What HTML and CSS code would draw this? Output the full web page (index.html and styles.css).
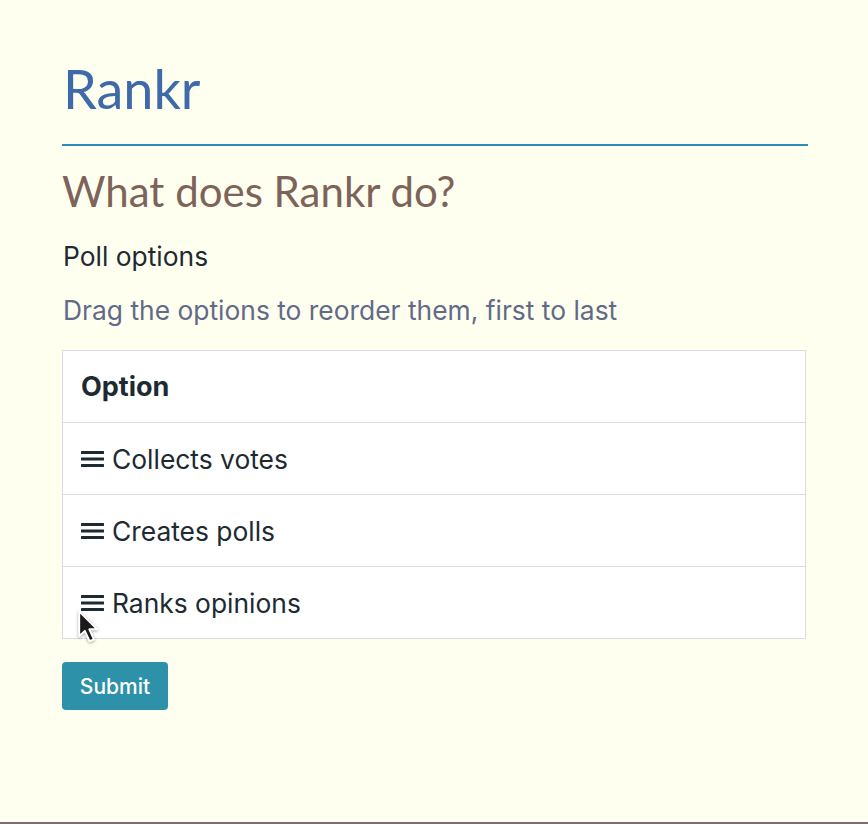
FILE: index.html
```html
<!DOCTYPE html>
<html lang="en">
<head>
<meta charset="utf-8">
<title>Rankr</title>
<link rel="stylesheet" href="styles.css">
</head>
<body>
<div class="page">
  <main class="container">
    <h1 class="title">Rankr</h1>
    <hr class="rule">
    <h2 class="question">What does Rankr do?</h2>
    <p class="label">Poll options</p>
    <p class="hint">Drag the options to reorder them, first to last</p>
    <div class="table">
      <div class="row head">Option</div>
      <div class="row"><svg class="grip" viewBox="0 0 23 18" width="23" height="18"><rect x="0" y="1" width="23" height="3" rx="0.5"/><rect x="0" y="7.5" width="23" height="3" rx="0.5"/><rect x="0" y="14" width="23" height="3" rx="0.5"/></svg><span>Collects votes</span></div>
      <div class="row"><svg class="grip" viewBox="0 0 23 18" width="23" height="18"><rect x="0" y="1" width="23" height="3" rx="0.5"/><rect x="0" y="7.5" width="23" height="3" rx="0.5"/><rect x="0" y="14" width="23" height="3" rx="0.5"/></svg><span>Creates polls</span></div>
      <div class="row last"><svg class="grip" viewBox="0 0 23 18" width="23" height="18"><rect x="0" y="1" width="23" height="3" rx="0.5"/><rect x="0" y="7.5" width="23" height="3" rx="0.5"/><rect x="0" y="14" width="23" height="3" rx="0.5"/></svg><span>Ranks opinions</span>
        <svg class="cursor" viewBox="0 0 22 32" width="22" height="32"><path d="M2 2 L2 25 L7.2 20 L11.5 29.5 L15.5 27.8 L11.3 18.6 L18.5 18.6 Z" fill="#1a1a1a" stroke="#ffffff" stroke-width="1.8" stroke-linejoin="round"/></svg>
      </div>
    </div>
    <button class="submit" type="button">Submit</button>
  </main>
</div>
</body>
</html>
```
FILE: styles.css
```css
html, body {
  margin: 0;
  padding: 0;
  background: #fffff0;
}
.page {
  min-height: 100vh;
  box-sizing: border-box;
  border-bottom: 2px solid #7c6f73;
}
.container {
  width: 746px;
  padding: 57px 0 0 62px;
  font-family: Inter, "Liberation Sans", sans-serif;
  color: #1d2a32;
}
.title {
  margin: 0;
  font-family: Lato, sans-serif;
  font-weight: 400;
  font-size: 54px;
  line-height: 1.2;
  color: #3f6aaa;
  padding-left: 1px;
}
.rule {
  margin: 22px 0 0 0;
  border: 0;
  height: 2px;
  background: #2f8bb8;
}
.question {
  margin: 20px 0 0 0;
  font-family: Lato, sans-serif;
  font-weight: 400;
  font-size: 42px;
  line-height: 1.2;
  color: #7d6359;
}
.label {
  margin: 21px 0 0 0;
  font-size: 26.4px;
  line-height: 39px;
  padding-left: 1px;
}
.hint {
  margin: 15px 0 0 0;
  font-size: 26.4px;
  line-height: 39px;
  color: #626a88;
  padding-left: 1px;
}
.table {
  margin-top: 20px;
  width: 742px;
  background: #ffffff;
  border: 1px solid #dcdce0;
}
.row {
  position: relative;
  display: flex;
  align-items: center;
  gap: 8px;
  height: 71px;
  padding: 0 18px;
  border-bottom: 1px solid #dcdce0;
  font-size: 26.4px;
}
.row.last {
  border-bottom: 0;
}
.head {
  font-weight: 700;
  font-size: 27px;
}
.grip {
  fill: #1d2a32;
  flex: none;
}
.cursor {
  position: absolute;
  left: 14px;
  top: 42px;
  width: 24px;
  height: 35px;
  filter: drop-shadow(0 1px 1.5px rgba(0, 0, 0, 0.35));
}
.submit {
  display: block;
  margin-top: 23px;
  width: 106px;
  height: 48px;
  border: 0;
  border-radius: 4px;
  background: #2d91a9;
  color: #ffffff;
  font-family: Inter, "Liberation Sans", sans-serif;
  font-size: 21px;
  font-weight: 500;
  padding: 0;
}
```
